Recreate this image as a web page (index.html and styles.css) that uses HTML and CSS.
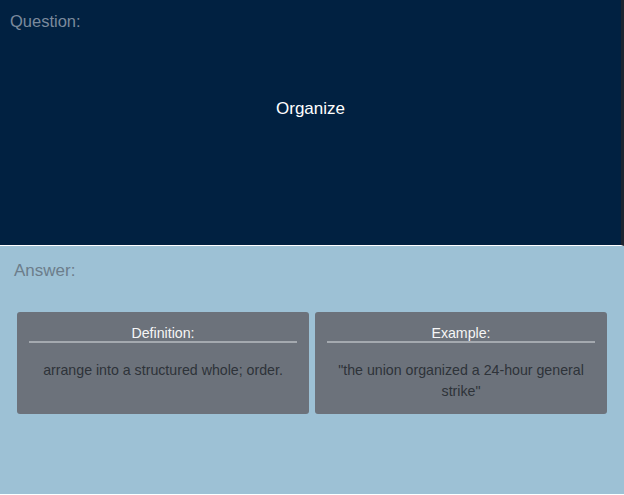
FILE: index.html
```html
<!DOCTYPE html>
<html lang="en">
<head>
<meta charset="utf-8">
<title>Flashcard</title>
<link rel="stylesheet" href="styles.css">
</head>
<body>
  <section class="question">
    <div class="label">Question:</div>
    <div class="term">Organize</div>
  </section>
  <section class="answer">
    <div class="label">Answer:</div>
    <div class="cards">
      <div class="card">
        <div class="card-title">Definition:</div>
        <div class="card-body">arrange into a structured whole; order.</div>
      </div>
      <div class="card">
        <div class="card-title">Example:</div>
        <div class="card-body">"the union organized a 24-hour general strike"</div>
      </div>
    </div>
  </section>
</body>
</html>
```

FILE: styles.css
```css
html, body {
  margin: 0;
  padding: 0;
  background: #ffffff;
  font-family: "Liberation Sans", Arial, sans-serif;
}

.question {
  box-sizing: border-box;
  height: 246px;
  background: #012141;
  border-right: 3px solid #1c2530;
  border-bottom: 1px solid #ffffff;
  padding: 12px 0 0 10px;
  display: flex;
  flex-direction: column;
}

.question .label {
  color: #7b8a9c;
  font-size: 16.5px;
  line-height: 18px;
}

.term {
  color: #ffffff;
  font-size: 17px;
  line-height: 19px;
  text-align: center;
  margin-top: 69px;
  padding-right: 10px;
}

.answer {
  box-sizing: border-box;
  height: 248px;
  background: #9dc1d5;
  padding: 15px 17px 0 14px;
}

.answer .label {
  color: #6c7d8b;
  font-size: 17px;
  line-height: 19px;
}

.cards {
  display: flex;
  gap: 6px;
  margin-top: 32px;
  margin-left: 3px;
}

.card {
  flex: 1;
  background: #6c727b;
  border-radius: 3px;
  padding: 13px 12px 12px;
  text-align: center;
}

.card-title {
  color: #f6f6f6;
  font-size: 14.2px;
  line-height: 16px;
  border-bottom: 2px solid #a4a9af;
}

.card-body {
  color: #2e3339;
  font-size: 14.2px;
  line-height: 21px;
  margin-top: 17px;
  padding: 0 4px;
}
```
